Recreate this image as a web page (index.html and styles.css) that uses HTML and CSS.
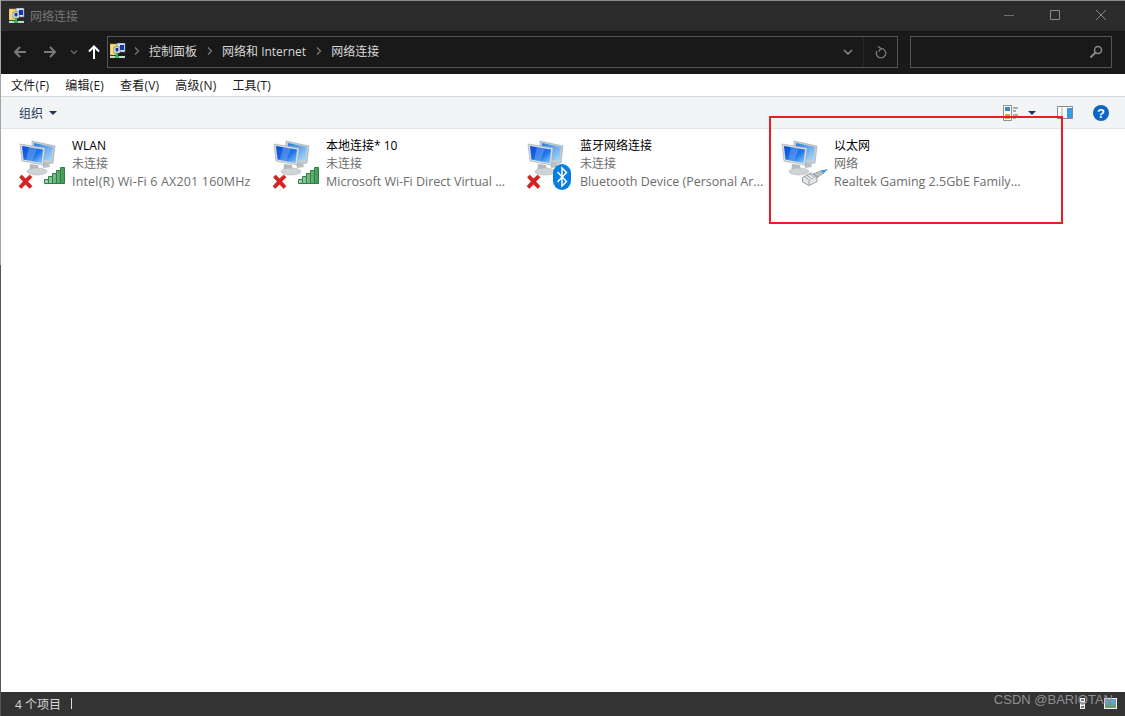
FILE: index.html
```html
<!DOCTYPE html>
<html lang="zh-CN">
<head>
    <meta charset="UTF-8">
    <title>网络连接</title>
    <link rel="stylesheet" href="styles.css">
</head>
<body>
    <svg class="defs" width="0" height="0">
        <defs>
            <linearGradient id="screen" x1="0" y1="0" x2="1" y2="1">
                <stop offset="0" stop-color="#0a48d8"/>
                <stop offset="0.6" stop-color="#1f78ea"/>
                <stop offset="1" stop-color="#8fd0f8"/>
            </linearGradient>
            <linearGradient id="screen-back" x1="0" y1="0" x2="1" y2="1">
                <stop offset="0" stop-color="#2a78e2"/>
                <stop offset="1" stop-color="#b0def8"/>
            </linearGradient>
            <linearGradient id="bars" x1="0" y1="0" x2="1" y2="0">
                <stop offset="0" stop-color="#a8d8b0"/>
                <stop offset="1" stop-color="#3c9a52"/>
            </linearGradient>
            <symbol id="folder-net" viewBox="0 0 16 16">
                <path d="M0 1h8v11H0z" fill="#f5df7e" stroke="#b59a3a" stroke-width=".6"/>
                <path d="M7 0h8v9H7z" fill="#d8e4f4" stroke="#5b6f9a" stroke-width=".6"/>
                <path d="M10 2h4v5h-4z" fill="#1437a8"/>
                <path d="M4 4h6v6H4z" fill="#fff" stroke="#333" stroke-width=".5"/>
                <path d="M5.500 5h3v3.500h-3z" fill="#1437a8"/>
                <path d="M7 10v3" stroke="#30b050" stroke-width="2"/>
                <path d="M0 13h15v2H0z" fill="#c8d8c8"/>
                <path d="M5 13h4v2H5z" fill="#25c060"/>
            </symbol>
            <symbol id="computers" viewBox="0 0 38 36">
                <path d="M14 1l23 5-2 17-8 1-13-4z" fill="#c6ced4" stroke="#9aa4ab" stroke-width=".6"/>
                <path d="M16 3l19 4-1.500 14-17.500-3z" fill="url(#screen-back)"/>
                <path d="M24 22l7 1 1 4-7 1z" fill="#b9bfc3"/>
                <path d="M2 4l25 4-1.500 17L4 21z" fill="#d6dcdf" stroke="#9aa4ab" stroke-width=".6"/>
                <path d="M4 6l21 3.500-1.300 13.500L5.500 19.500z" fill="url(#screen)"/>
                <path d="M11 7l8 1.300-5 12.700-6-1z" fill="#fff" opacity=".2"/>
                <path d="M12 24l8 1 .5 4-9 0z" fill="#b4babe"/>
                <ellipse cx="19" cy="31.500" rx="10" ry="3.500" fill="#cfd3d6" stroke="#adb3b7" stroke-width=".5"/>
            </symbol>
            <symbol id="red-x" viewBox="0 0 16 16">
                <path d="M1.500 3.500L4 1l4 4 4.500-4L15 3.500 10.500 8l4.500 5-2.500 2.500L8 11l-4.500 4.500L1 13l4.500-5z" fill="#dc2020" stroke="#a81414" stroke-width=".5"/>
            </symbol>
            <symbol id="signal" viewBox="0 0 21 17">
                <path d="M.5 16.500v-4h4v-3h4v-3h4v-3h4v-3h4v16z" fill="url(#bars)" stroke="#2e7d46"/>
                <path d="M4.500 12.500v4M8.500 9.500v7M12.500 6.500v10M16.500 3.500v13" stroke="#2e7d46"/>
            </symbol>
        </defs>
    </svg>

    <div class="window">
        <header class="titlebar">
            <svg class="app-icon"><use href="#folder-net"/></svg>
            <span class="title">网络连接</span>
            <div class="win-controls">
                <svg width="16" height="16" viewBox="0 0 16 16"><path d="M3 8.500h10" stroke="#6f6f6f"/></svg>
                <svg width="16" height="16" viewBox="0 0 16 16"><path d="M3.500 3.500h9v9h-9z" fill="none" stroke="#8a8a8a"/></svg>
                <svg width="16" height="16" viewBox="0 0 16 16"><path d="M3 3l10 10M13 3L3 13" stroke="#8a8a8a"/></svg>
            </div>
        </header>

        <div class="addressbar">
            <div class="nav-btns">
                <svg width="16" height="16" viewBox="0 0 16 16"><path d="M14 8H3M8 3L3 8l5 5" fill="none" stroke="#7a7a7a" stroke-width="2"/></svg>
                <svg width="16" height="16" viewBox="0 0 16 16"><path d="M2 8h11M8 3l5 5-5 5" fill="none" stroke="#7a7a7a" stroke-width="2"/></svg>
                <svg class="nav-down" width="8" height="8" viewBox="0 0 8 8"><path d="M1 2.500l3 3 3-3" fill="none" stroke="#6a6a6a" stroke-width="1.400"/></svg>
                <svg width="14" height="16" viewBox="0 0 14 16"><path d="M7 15V3M2 7.500L7 2.500l5 5" fill="none" stroke="#fff" stroke-width="2"/></svg>
            </div>
            <div class="path-box">
                <svg class="path-icon"><use href="#folder-net"/></svg>
                <svg class="crumb-sep" width="6" height="8" viewBox="0 0 6 8"><path d="M1 .5L4.500 4 1 7.500" fill="none" stroke="#777" stroke-width="1.300"/></svg>
                <span class="crumb">控制面板</span>
                <svg class="crumb-sep" width="6" height="8" viewBox="0 0 6 8"><path d="M1 .5L4.500 4 1 7.500" fill="none" stroke="#777" stroke-width="1.300"/></svg>
                <span class="crumb">网络和 Internet</span>
                <svg class="crumb-sep" width="6" height="8" viewBox="0 0 6 8"><path d="M1 .5L4.500 4 1 7.500" fill="none" stroke="#777" stroke-width="1.300"/></svg>
                <span class="crumb">网络连接</span>
                <div class="path-tools">
                    <div class="path-drop">
                        <svg width="10" height="7" viewBox="0 0 10 7"><path d="M1 1l4 4 4-4" fill="none" stroke="#8a8a8a" stroke-width="1.500"/></svg>
                    </div>
                    <div class="path-refresh">
                        <svg width="12" height="13" viewBox="0 0 12 13"><path d="M6 2.500A4.700 4.700 0 1 1 1.900 5M2.800 .5L6 2.500 3.800 5.500" fill="none" stroke="#777" stroke-width="1.400"/></svg>
                    </div>
                </div>
            </div>
            <div class="search-box">
                <svg width="14" height="14" viewBox="0 0 14 14"><circle cx="9" cy="5" r="3.500" fill="none" stroke="#8a8a8a" stroke-width="1.500"/><path d="M6.500 7.500L1.500 12.500" stroke="#8a8a8a" stroke-width="2"/></svg>
            </div>
        </div>

        <nav class="menubar">
            <span>文件(F)</span>
            <span>编辑(E)</span>
            <span>查看(V)</span>
            <span>高级(N)</span>
            <span>工具(T)</span>
        </nav>

        <div class="toolbar">
            <span class="organize">组织</span>
            <span class="caret"></span>
            <div class="tool-right">
                <svg width="16" height="16" viewBox="0 0 16 16">
                    <path d="M.5.500h8v15h-8z" fill="#fff" stroke="#8f8f8f"/>
                    <path d="M2 2h5v4H2z" fill="#3a86c8"/>
                    <path d="M2 9h5v5H2z" fill="#d8a040"/>
                    <path d="M10 3h5M10 6h3M10 10h5M10 13h3" stroke="#666"/>
                </svg>
                <span class="caret view-caret"></span>
                <svg class="pane-icon" width="16" height="14" viewBox="0 0 16 14">
                    <path d="M.5.500h15v12H.5z" fill="#fff" stroke="#888"/>
                    <path d="M5 .5v12" stroke="#aaa"/>
                    <path d="M10 2h5v10h-5z" fill="#3d97e8"/>
                </svg>
                <svg class="help-icon" width="16" height="16" viewBox="0 0 16 16">
                    <circle cx="8" cy="8" r="8" fill="#0b66c4"/>
                    <text x="8" y="12.500" class="help-mark">?</text>
                </svg>
            </div>
        </div>

        <main class="content">
            <div class="item">
                <div class="item-icon">
                    <svg class="pc"><use href="#computers"/></svg>
                    <svg class="badge-x"><use href="#red-x"/></svg>
                    <svg class="badge-signal"><use href="#signal"/></svg>
                </div>
                <div class="item-text">
                    <div class="item-name">WLAN</div>
                    <div>未连接</div>
                    <div class="item-desc item-desc-wide">Intel(R) Wi-Fi 6 AX201 160MHz</div>
                </div>
            </div>
            <div class="item">
                <div class="item-icon">
                    <svg class="pc"><use href="#computers"/></svg>
                    <svg class="badge-x"><use href="#red-x"/></svg>
                    <svg class="badge-signal"><use href="#signal"/></svg>
                </div>
                <div class="item-text">
                    <div class="item-name">本地连接* 10</div>
                    <div>未连接</div>
                    <div class="item-desc">Microsoft Wi-Fi Direct Virtual ...</div>
                </div>
            </div>
            <div class="item">
                <div class="item-icon">
                    <svg class="pc"><use href="#computers"/></svg>
                    <svg class="badge-x"><use href="#red-x"/></svg>
                    <svg class="badge-bt" viewBox="0 0 20 26">
                        <rect x="1" y="0" width="18" height="26" rx="9" fill="#0a7de0"/>
                        <path d="M5.500 8l9 9.500L10 22V4l4.500 4.500L5.500 18" fill="none" stroke="#fff" stroke-width="1.500"/>
                    </svg>
                </div>
                <div class="item-text">
                    <div class="item-name">蓝牙网络连接</div>
                    <div>未连接</div>
                    <div class="item-desc">Bluetooth Device (Personal Ar...</div>
                </div>
            </div>
            <div class="item">
                <div class="item-icon">
                    <svg class="pc"><use href="#computers"/></svg>
                    <svg class="badge-cable" viewBox="0 0 26 17">
                        <path d="M.5 8.500L9 4l6 3.500v5L7 16.500.5 13z" fill="#e4e8ea" stroke="#7e888f" stroke-width=".8"/>
                        <path d="M2.500 8l6 4M5 6.500l6 4M7.500 5l6 4M7 12v4" stroke="#8d969c" stroke-width=".8"/>
                        <path d="M11 5l9-3.500 2 2.500-7 4.500z" fill="#a8b4ba" stroke="#7e888f" stroke-width=".7"/>
                        <path d="M13 4.500l5 2M16 3.200l4 2" stroke="#dfe4e6" stroke-width=".7"/>
                        <path d="M19 1.500L26 0l-4 4z" fill="#2f9fdc"/>
                    </svg>
                </div>
                <div class="item-text">
                    <div class="item-name">以太网</div>
                    <div>网络</div>
                    <div class="item-desc">Realtek Gaming 2.5GbE Family...</div>
                </div>
            </div>
        </main>

        <footer class="statusbar">
            <span class="count">4 个项目</span>
            <span class="status-sep"></span>
            <svg class="view-details" width="5" height="11" viewBox="0 0 5 11">
                <path d="M0 0h5v11H0z" fill="#f2f2f2"/>
                <path d="M1 1h3v2H1z" fill="#5a7d9a"/>
                <path d="M1 4.500h3v2H1z" fill="#c05050"/>
                <path d="M1 8h3v2H1z" fill="#5a7d9a"/>
            </svg>
            <svg class="view-large" width="13" height="11" viewBox="0 0 13 11">
                <path d="M0 0h13v11H0z" fill="#f4f4f4"/>
                <path d="M1 1h11v9H1z" fill="#5ba3d0"/>
                <path d="M1 7l3-2 3 2 5-1v4H1z" fill="#6f9a7a"/>
            </svg>
        </footer>
    </div>

    <div class="highlight"></div>
    <div class="watermark">CSDN @BARIOTAN</div>
</body>
</html>
```

FILE: styles.css
```css
* {
    box-sizing: border-box;
}
html, body {
    margin: 0;
    height: 100%;
    overflow: hidden;
}
body {
    position: relative;
    font-family: "Open Sans", "Noto Sans CJK SC", sans-serif;
    font-size: 12px;
    background: #fff;
}
.defs {
    position: absolute;
}
.window {
    height: 716px;
    display: flex;
    flex-direction: column;
    border-left: 1px solid;
    border-image: linear-gradient(#a5a5a5 265px, #555 265px) 1;
}

/* title bar */
.titlebar {
    height: 31px;
    display: flex;
    align-items: center;
    padding-left: 8px;
    background: #2b2b2b;
    border-top: 1px solid #8c8c8c;
}
.app-icon {
    width: 16px;
    height: 16px;
}
.title {
    margin-left: 5px;
    color: #767676;
}
.win-controls {
    margin-left: auto;
    margin-bottom: 2px;
    display: flex;
    gap: 30px;
    padding-right: 16px;
}

/* address bar */
.addressbar {
    height: 43px;
    display: flex;
    align-items: center;
    padding: 5px 0 6px;
    background: #191919;
}
.nav-btns {
    width: 106px;
    display: flex;
    align-items: center;
    padding-left: 11px;
    gap: 14px;
}
.nav-btns .nav-down {
    margin: 0 -5px 0 -2px;
}
.path-box {
    width: 791px;
    height: 32px;
    display: flex;
    align-items: center;
    border: 1px solid #555;
    padding-left: 2px;
    color: #d8d8d8;
}
.path-icon {
    width: 16px;
    height: 16px;
    margin: 0 -1px 2px 0;
}
.crumb {
    margin-bottom: 3px;
}
.crumb-sep {
    margin: 0 9px 2px 10px;
}
.path-icon + .crumb-sep {
    margin-left: 9px;
}
.path-tools {
    margin-left: auto;
    height: 100%;
    display: flex;
}
.path-drop {
    width: 32px;
    display: flex;
    align-items: center;
    justify-content: center;
    border-right: 1px solid #262626;
}
.path-refresh {
    width: 33px;
    display: flex;
    align-items: center;
    justify-content: center;
}
.search-box {
    width: 202px;
    height: 32px;
    margin-left: 12px;
    display: flex;
    align-items: center;
    justify-content: flex-end;
    padding-right: 8px;
    border: 1px solid #555;
}

/* menu */
.menubar {
    height: 23px;
    display: flex;
    align-items: center;
    gap: 16px;
    padding-left: 10px;
    background: #fff;
    border-bottom: 1px solid #d9d9d9;
    color: #1a1a1a;
    letter-spacing: .2px;
}

/* toolbar */
.toolbar {
    height: 32px;
    display: flex;
    align-items: center;
    padding-left: 18px;
    background: #f3f4f6;
    border-bottom: 1px solid #e3e5e8;
    color: #1e395b;
}
.caret {
    width: 0;
    height: 0;
    margin-left: 6px;
    border-left: 4px solid transparent;
    border-right: 4px solid transparent;
    border-top: 4px solid #1e395b;
}
.tool-right {
    margin-left: auto;
    display: flex;
    align-items: center;
    padding-right: 16px;
}
.view-caret {
    margin-left: 9px;
}
.pane-icon {
    margin-left: 21px;
}
.help-icon {
    margin-left: 20px;
}
.help-mark {
    font: bold 13px "Liberation Sans", sans-serif;
    fill: #fff;
    text-anchor: middle;
}

/* items */
.content {
    flex: 1;
    display: grid;
    grid-template-columns: repeat(4, 254px);
    grid-auto-rows: 54px;
    padding: 8px 0 0 18px;
    background: #fff;
}
.item {
    display: flex;
    gap: 5px;
}
.item-icon {
    position: relative;
    width: 48px;
    height: 48px;
    flex: none;
}
.pc {
    position: absolute;
    left: -1px;
    top: 3px;
    width: 38px;
    height: 36px;
}
.badge-x {
    position: absolute;
    left: -1px;
    top: 37px;
    width: 15px;
    height: 15px;
}
.badge-signal {
    position: absolute;
    left: 25px;
    top: 30px;
    width: 21px;
    height: 17px;
}
.badge-bt {
    position: absolute;
    left: 25px;
    top: 27px;
    width: 20px;
    height: 26px;
}
.badge-cable {
    position: absolute;
    left: 21px;
    top: 32px;
    width: 26px;
    height: 17px;
}
.item-text {
    line-height: 18px;
    color: #6d6d6d;
    white-space: nowrap;
}
.item-name {
    color: #000;
}
.item-desc {
    font-size: 12.5px;
}
.item-desc-wide {
    letter-spacing: .17px;
}

/* status */
.statusbar {
    height: 24px;
    display: flex;
    align-items: center;
    padding: 0 8px 1px 14px;
    background: #333;
    color: #d8d8d8;
}
.status-sep {
    width: 1px;
    height: 11px;
    margin-left: 10px;
    background: #ddd;
}
.view-details {
    margin-left: auto;
}
.view-large {
    margin-left: 19px;
}

/* overlays */
.highlight {
    position: absolute;
    left: 769px;
    top: 116px;
    width: 294px;
    height: 108px;
    border: 2px solid #ed1c24;
}
.watermark {
    position: absolute;
    right: 12px;
    bottom: 4px;
    font-family: "Liberation Sans", sans-serif;
    font-size: 13px;
    line-height: 24px;
    color: #8f8f8f;
}
```
